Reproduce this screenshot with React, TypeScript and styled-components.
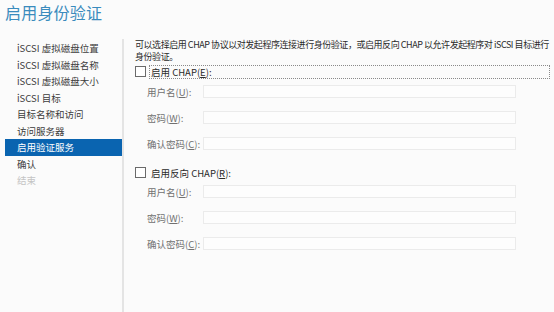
import React from 'react'
import styled, { createGlobalStyle } from 'styled-components'

const GlobalStyle = createGlobalStyle`
  html, body {
    margin: 0;
    padding: 0;
    background: #fbfbfb;
  }
  body {
    font-family: "Noto Sans CJK SC", "Liberation Sans", sans-serif;
  }
`

const Page = styled.div`
  width: 554px;
  height: 312px;
  overflow: hidden;
  display: flex;
  flex-direction: column;
  background: #fbfbfb;
`
const Title = styled.h1`
  margin: 0;
  padding: 0 0 0 5px;
  height: 39px;
  box-sizing: border-box;
  font-size: 16px;
  font-weight: 400;
  line-height: 24px;
  letter-spacing: 0.2px;
  color: #3a8bbd;
`
const Body = styled.div`
  flex: 1;
  display: flex;
`
const Nav = styled.ul`
  list-style: none;
  flex: none;
  margin: 0;
  padding: 1px 0 0 5px;
  width: 117px;
  border-right: 2px solid #e4e4e4;
`
const NavItem = styled.li<{ $active?: boolean; $disabled?: boolean }>`
  height: 16.5px;
  padding-left: 12px;
  font-size: 9.5px;
  line-height: 16.5px;
  white-space: nowrap;
  color: ${(p) => (p.$active ? '#fff' : p.$disabled ? '#c4c4c4' : '#3c3c3c')};
  background: ${(p) => (p.$active ? '#0a64b0' : 'transparent')};
`
const Content = styled.div`
  flex: 1;
  min-width: 0;
  padding: 0 0 0 11px;
  display: flex;
  flex-direction: column;
`
const Description = styled.p`
  margin: 0;
  font-size: 9px;
  letter-spacing: -0.45px;
  line-height: 11.5px;
  white-space: nowrap;
  color: #2a2a2a;
`
const CheckRow = styled.label<{ $mt: number }>`
  display: flex;
  align-items: center;
  gap: 3px;
  height: 13px;
  margin-top: ${(p) => p.$mt}px;
  font-size: 9.5px;
  color: #2a2a2a;
`
const Box = styled.span`
  width: 9px;
  height: 9px;
  border: 1px solid #6a6a6a;
  background: #fff;
  flex: none;
`
const CheckLabel = styled.span<{ $focused?: boolean }>`
  flex: ${(p) => (p.$focused ? 1 : 'none')};
  height: 12px;
  line-height: 12px;
  padding-left: 1px;
  border: 1px dotted ${(p) => (p.$focused ? '#8a8a8a' : 'transparent')};
  margin-right: 4px;
`
const Fields = styled.div<{ $mt: number }>`
  display: flex;
  flex-direction: column;
  gap: 13px;
  margin-top: ${(p) => p.$mt}px;
  padding-left: 12px;
`
const Field = styled.div`
  display: flex;
  align-items: center;
  height: 13px;
`
const FieldLabel = styled.span`
  width: 56px;
  flex: none;
  white-space: nowrap;
  font-size: 9.5px;
  color: #707070;
`
const Input = styled.div`
  width: 311px;
  height: 11px;
  border: 1px solid #ebebeb;
  background: #fdfdfd;
`

const U = styled.span`
  text-decoration: underline;
`

const navItems = [
  'iSCSI 虚拟磁盘位置',
  'iSCSI 虚拟磁盘名称',
  'iSCSI 虚拟磁盘大小',
  'iSCSI 目标',
  '目标名称和访问',
  '访问服务器',
  '启用验证服务',
  '确认',
  '结束',
]

const CredentialFields = ({ mt }: { mt: number }) => (
  <Fields $mt={mt}>
    <Field>
      <FieldLabel>用户名(<U>U</U>):</FieldLabel>
      <Input />
    </Field>
    <Field>
      <FieldLabel>密码(<U>W</U>):</FieldLabel>
      <Input />
    </Field>
    <Field>
      <FieldLabel>确认密码(<U>C</U>):</FieldLabel>
      <Input />
    </Field>
  </Fields>
)

const App = () => {
  return (
    <Page>
      <GlobalStyle />
      <Title>启用身份验证</Title>
      <Body>
        <Nav>
          {navItems.map((item, i) => (
            <NavItem key={item} $active={i === 6} $disabled={i === 8}>
              {item}
            </NavItem>
          ))}
        </Nav>
        <Content>
          <Description>
            可以选择启用 CHAP 协议以对发起程序连接进行身份验证，或启用反向 CHAP 以允许发起程序对 iSCSI 目标进行
            <br />
            身份验证。
          </Description>
          <CheckRow $mt={3}>
            <Box />
            <CheckLabel $focused>启用 CHAP(<U>E</U>):</CheckLabel>
          </CheckRow>
          <CredentialFields mt={7} />
          <CheckRow $mt={16}>
            <Box />
            <CheckLabel>启用反向 CHAP(<U>R</U>):</CheckLabel>
          </CheckRow>
          <CredentialFields mt={6} />
        </Content>
      </Body>
    </Page>
  )
}

export default App
